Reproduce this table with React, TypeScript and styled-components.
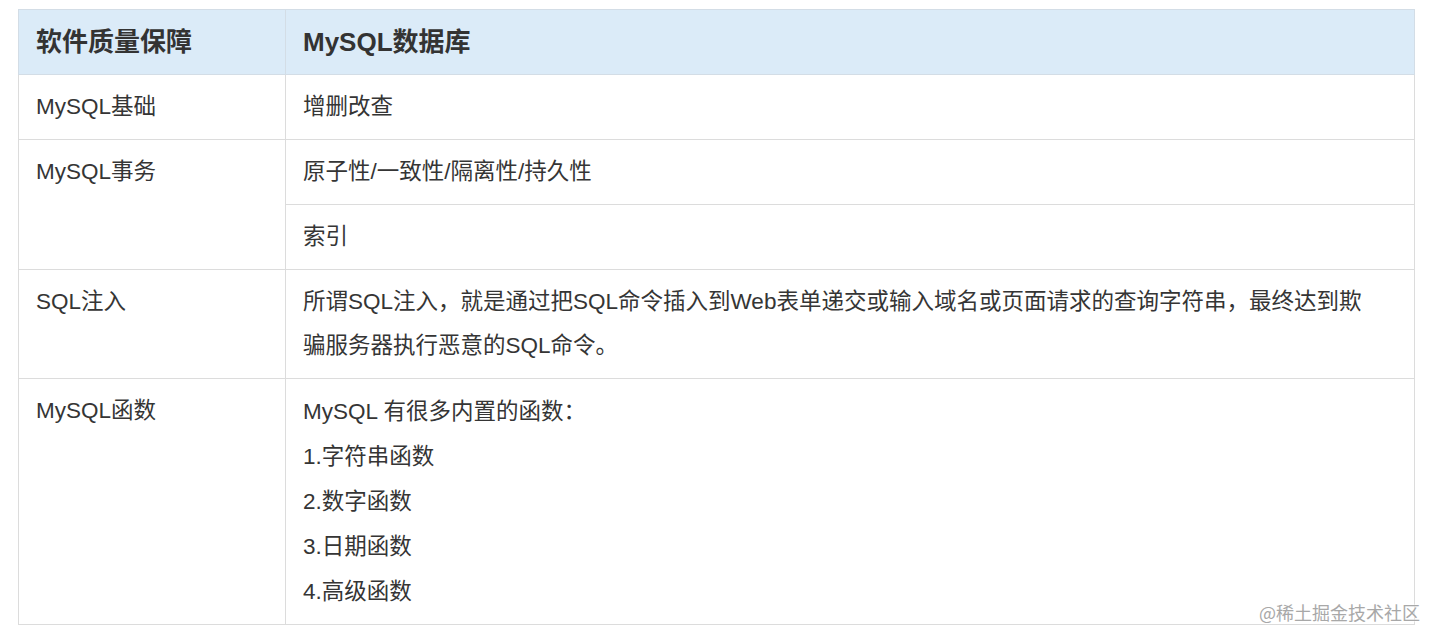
import React from 'react';
import styled, { createGlobalStyle } from 'styled-components';

const GlobalStyle = createGlobalStyle`
  html, body {
    margin: 0;
    padding: 0;
    background: #ffffff;
  }
  body {
    font-family: "Liberation Sans", "Noto Sans CJK SC", sans-serif;
    color: #353535;
  }
`;

const Page = styled.div`
  position: relative;
  width: 1440px;
  height: 643px;
  padding: 9px 25px 0 18px;
  box-sizing: border-box;
  overflow: hidden;
`;

const Table = styled.table`
  width: 1397px;
  border-collapse: collapse;
  table-layout: fixed;
`;

// width is the content width; padding adds 34px on top of it
const HeadCell = styled.th<{ $w?: number }>`
  width: ${(p) => (p.$w ? `${p.$w}px` : 'auto')};
  background: #dbebf8;
  border: 1px solid #d3dde6;
  padding: 10px 17px;
  text-align: left;
  font-size: 26px;
  font-weight: 700;
  line-height: 44px;
  color: #333;
`;

const Cell = styled.td<{ $lh?: number }>`
  border: 1px solid #dcdcdc;
  padding: 10px 17px;
  vertical-align: top;
  font-size: 22.5px;
  line-height: ${(p) => p.$lh ?? 44}px;
  color: #353535;
  white-space: nowrap;
`;

const Line = styled.div``;

const Watermark = styled.div`
  position: absolute;
  right: 20px;
  top: 600px;
  font-family: "Noto Sans CJK SC", sans-serif;
  font-size: 18px;
  line-height: 24px;
  color: #a8a8a8;
  text-shadow: 0 0 2px #fff, 0 0 2px #fff;
`;

const funcs = ['MySQL 有很多内置的函数：', '1.字符串函数', '2.数字函数', '3.日期函数', '4.高级函数'];

export default function App() {
  return (
    <>
      <GlobalStyle />
      <Page>
        <Table>
          <thead>
            <tr>
              <HeadCell $w={232}>软件质量保障</HeadCell>
              <HeadCell>MySQL数据库</HeadCell>
            </tr>
          </thead>
          <tbody>
            <tr>
              <Cell>MySQL基础</Cell>
              <Cell>增删改查</Cell>
            </tr>
            <tr>
              <Cell rowSpan={2}>MySQL事务</Cell>
              <Cell>原子性/一致性/隔离性/持久性</Cell>
            </tr>
            <tr>
              <Cell>索引</Cell>
            </tr>
            <tr>
              <Cell>SQL注入</Cell>
              <Cell>
                <Line>所谓SQL注入，就是通过把SQL命令插入到Web表单递交或输入域名或页面请求的查询字符串，最终达到欺</Line>
                <Line>骗服务器执行恶意的SQL命令。</Line>
              </Cell>
            </tr>
            <tr>
              <Cell>MySQL函数</Cell>
              <Cell $lh={45}>
                {funcs.map((f) => (
                  <Line key={f}>{f}</Line>
                ))}
              </Cell>
            </tr>
          </tbody>
        </Table>
        <Watermark>@稀土掘金技术社区</Watermark>
      </Page>
    </>
  );
}
